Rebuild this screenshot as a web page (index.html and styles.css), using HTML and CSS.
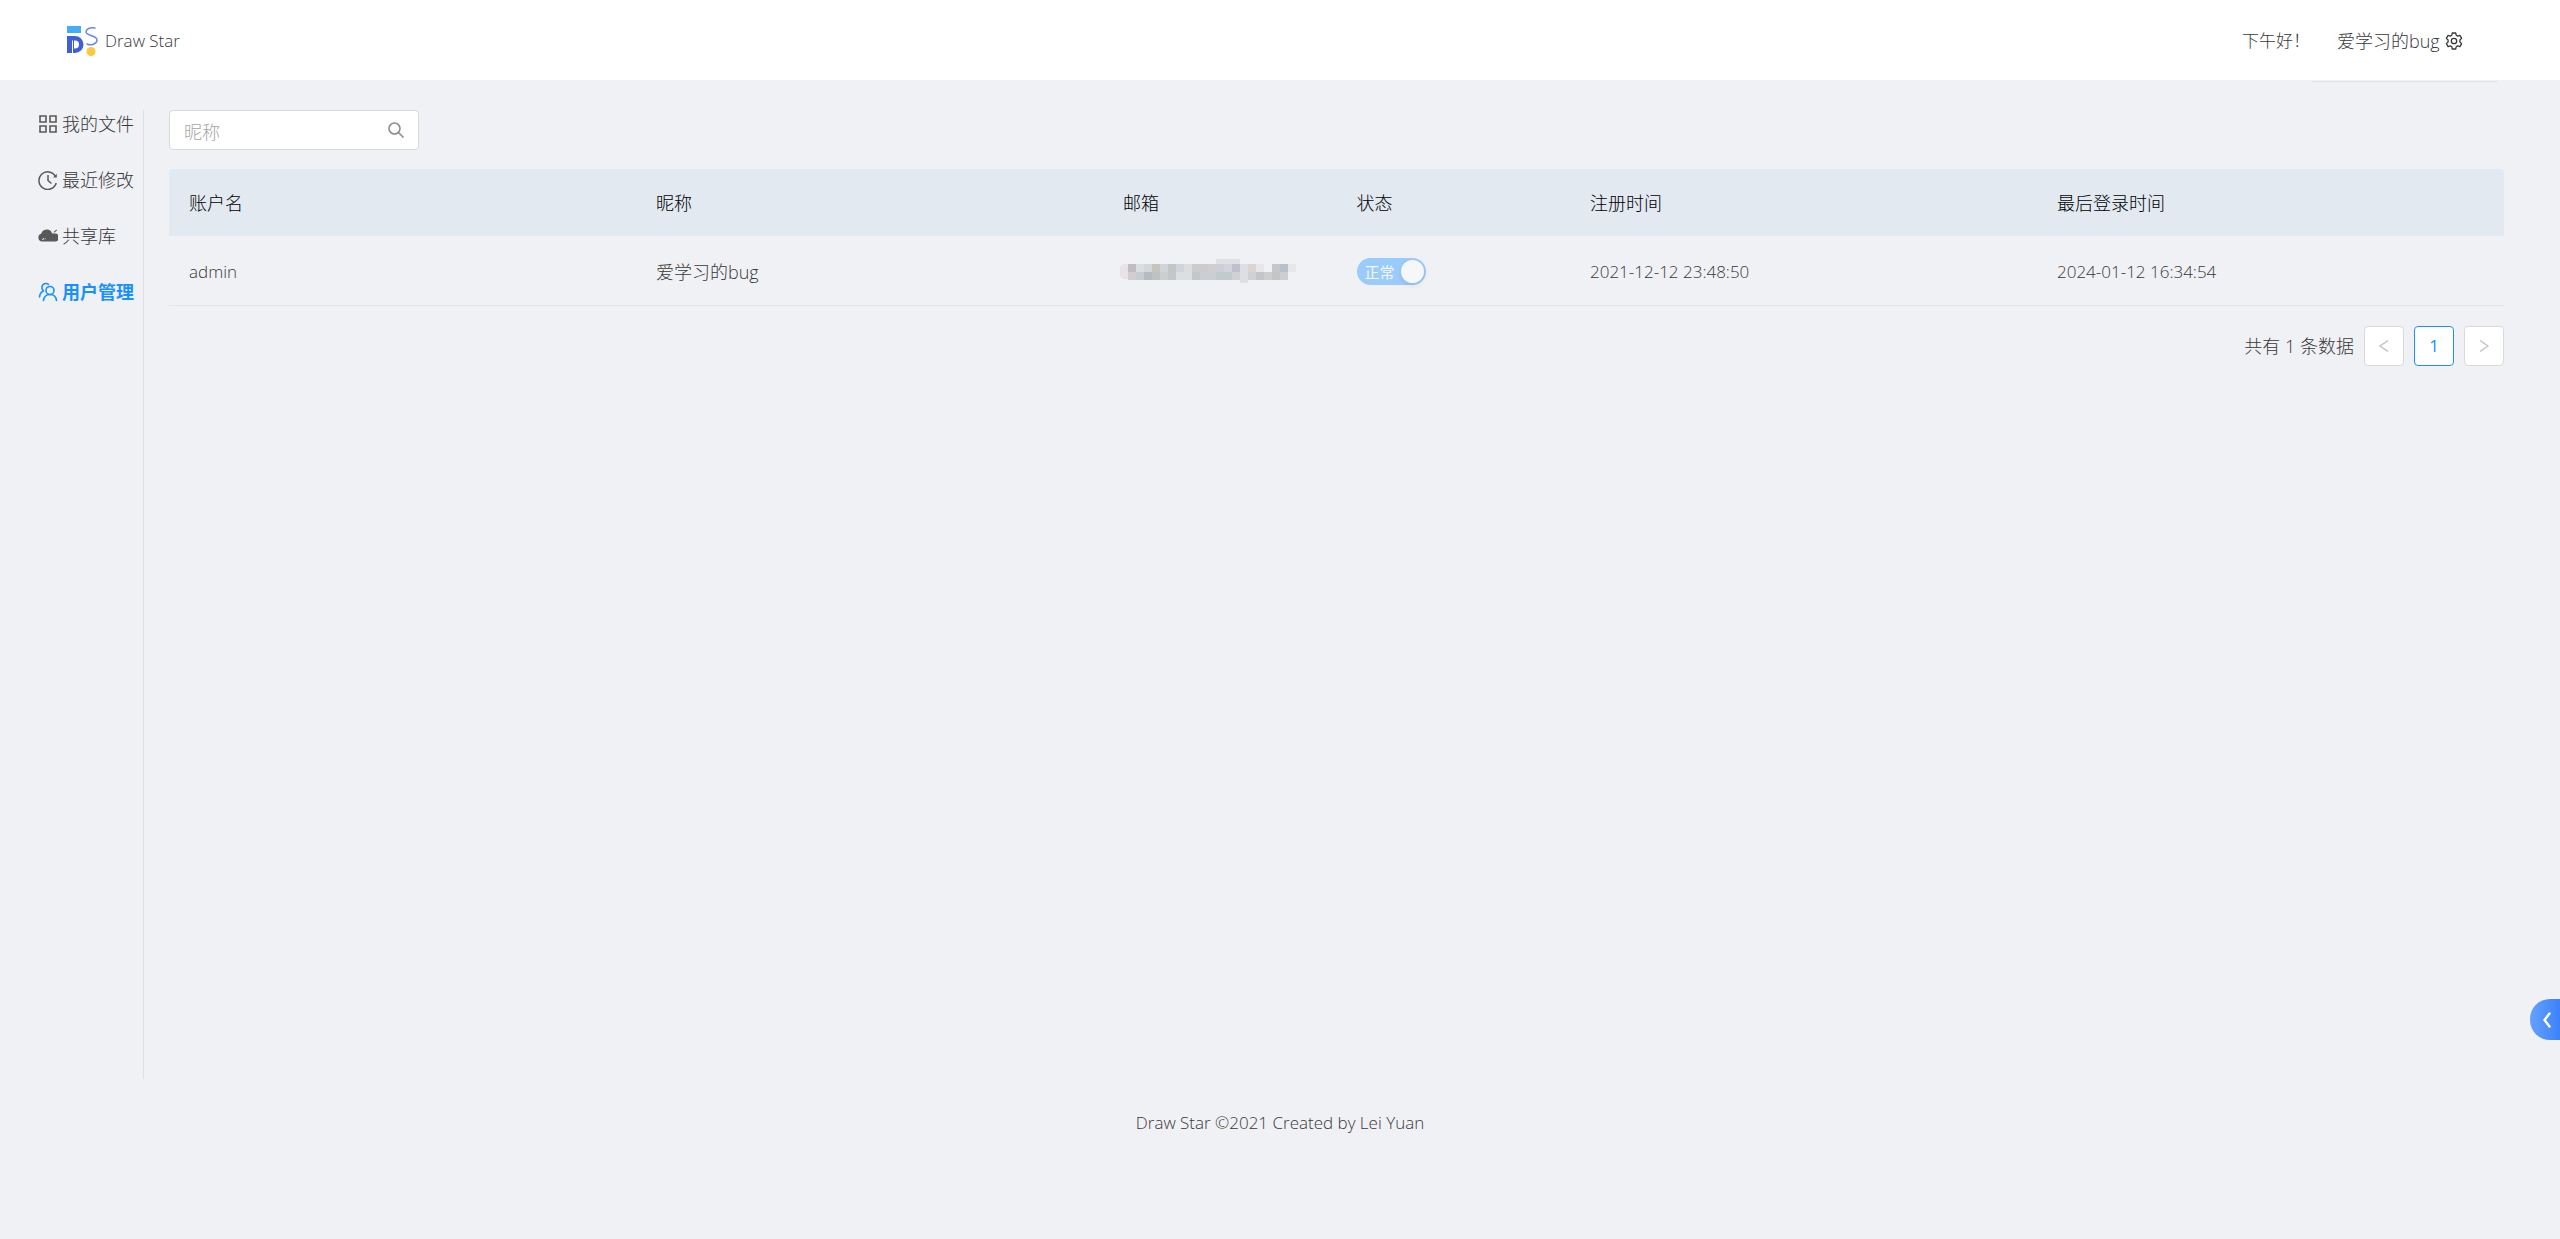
FILE: index.html
```html
<!DOCTYPE html>
<html lang="zh-CN">
<head>
<meta charset="utf-8">
<meta name="viewport" content="width=device-width, initial-scale=1">
<title>Draw Star</title>
<link rel="stylesheet" href="styles.css">
</head>
<body>
<header class="header">
  <a class="brand" href="#">
    <svg class="brand-logo" viewBox="0 0 32 32" aria-hidden="true">
      <path fill="#42adfb" d="M1 1h14v7H1z"/>
      <path fill="#3f5fd2" fill-rule="evenodd" d="M1 11h8a8.500 8.500 0 0 1 0 17H1zM6 15.500V28h1v-12.500zM8 15.500v8h1a4 4 0 0 0 0-8z"/>
      <path fill="none" stroke="#6f86e6" stroke-width="1.500" stroke-linecap="round" d="M29 3c-5-1-9 1-9 4 0 4 11 3 11 8 0 4-6 6-10 4"/>
      <circle cx="25" cy="26.500" r="4.500" fill="#fdc93e"/>
    </svg>
    <span>Draw Star</span>
  </a>
  <div class="greeting">下午好！</div>
  <a class="account" href="#">
    <span>爱学习的bug</span>
    <svg class="icon" viewBox="0 0 18 18" aria-hidden="true"><g fill="none" stroke="currentColor" stroke-width="1.300" stroke-linejoin="round"><path d="M7.300 1h3.400l.5 2.200 1.500.9 2.200-.7 1.700 3-1.700 1.600v2l1.700 1.600-1.700 3-2.200-.7-1.500.9-.5 2.200H7.300l-.5-2.200-1.500-.9-2.200.7-1.700-3L3.100 10V8L1.400 6.400l1.700-3 2.200.7 1.500-.9z"/><circle cx="9" cy="9" r="2.700"/></g></svg>
  </a>
</header>

<div class="body">
  <nav class="sidebar">
    <a class="nav-item" href="#">
      <svg class="nav-icon" viewBox="0 0 20 20" aria-hidden="true"><path fill="none" stroke="currentColor" stroke-width="1.600" d="M2 2h6v6H2zM12 2h6v6h-6zM2 12h6v6H2zM12 12h6v6h-6z"/></svg>
      <span>我的文件</span>
    </a>
    <a class="nav-item" href="#">
      <svg class="nav-icon" viewBox="0 0 20 20" aria-hidden="true"><path fill="none" stroke="currentColor" stroke-width="1.500" d="M18.200 13a8.800 8.800 0 1 1-.8-6.700M10 5v5.500l3.400 3"/><path fill="currentColor" d="M18.800 3.800v3.700h-3.700z"/></svg>
      <span>最近修改</span>
    </a>
    <a class="nav-item" href="#">
      <svg class="nav-icon" viewBox="0 0 20 20" aria-hidden="true"><path fill="currentColor" d="M4 15.500a4 4 0 0 1-.8-7.800C4 4.800 6.500 3.500 9 3.500c2.500 0 4.500 1.500 5 3.700 1 .3 2 .3 3.200.3a4 4 0 0 1-.7 8zM15.500 6l3-2.500.6.700-2.800 2.600z"/><path fill="#f0f1f5" d="M4 13.500l1.500-1.500.8.800L5 14zM7 12l.8.800-1 1z"/></svg>
      <span>共享库</span>
    </a>
    <a class="nav-item nav-item-active" href="#" aria-current="page">
      <svg class="nav-icon" viewBox="0 0 20 20" aria-hidden="true"><g fill="none" stroke="currentColor" stroke-width="1.600" stroke-linecap="round"><circle cx="12" cy="8.500" r="4"/><path d="M5.500 18.500c.5-4 3-6 6.500-6s6 2 6.500 6M5.500 8.800a3.800 3.800 0 1 1 5-6.500M1.500 15c.2-3 1.500-5 4-6"/></g></svg>
      <span>用户管理</span>
    </a>
  </nav>

  <main class="content">
    <form class="search">
      <input class="search-input" type="text" placeholder="昵称" aria-label="昵称">
      <button class="search-button" type="button" aria-label="搜索">
        <svg class="icon" viewBox="0 0 18 18" aria-hidden="true"><g fill="none" stroke="currentColor" stroke-width="1.600"><circle cx="7.500" cy="7.500" r="5.500"/><path d="M11.500 11.500l5 5"/></g></svg>
      </button>
    </form>

    <table class="users">
      <colgroup><col class="wide"><col class="wide"><col class="narrow"><col class="narrow"><col class="wide"><col class="wide"></colgroup>
      <thead>
        <tr><th>账户名</th><th>昵称</th><th>邮箱</th><th>状态</th><th>注册时间</th><th>最后登录时间</th></tr>
      </thead>
      <tbody>
        <tr>
          <td>admin</td>
          <td class="name-cell">爱学习的bug</td>
          <td class="mail-cell"><svg class="mail-mask" viewBox="0 0 176 24" shape-rendering="crispEdges" aria-hidden="true">
            <path fill="#e8e3e4" d="M2 5h6v15H2zM0 7h2v11H0z"/><path fill="#c1bcc2" d="M8 5h8v8H8z"/><path fill="#dbdedd" d="M16 5h8v8h-8z"/><path fill="#d2d8da" d="M24 5h8v8h-8z"/><path fill="#c6c5bd" d="M32 5h8v8h-8z"/><path fill="#d0d4db" d="M40 5h8v8h-8zM56 5h8v8h-8z"/><path fill="#c4c5c6" d="M48 5h8v8h-8z"/><path fill="#dcdddf" d="M64 5h8v8h-8z"/><path fill="#cccccd" d="M72 5h16v8H72z"/><path fill="#d2cdd1" d="M88 5h8v8h-8z"/><path fill="#dfe0e5" d="M96 0h24v5H96z"/><path fill="#cdced6" d="M96 5h8v8h-8z"/><path fill="#d1d3df" d="M104 5h8v8h-8z"/><path fill="#bfc0cb" d="M112 5h8v8h-8z"/><path fill="#dedfe2" d="M120 5h8v19h-8z"/><path fill="#ddd2d4" d="M128 5h8v8h-8z"/><path fill="#e5e7eb" d="M136 5h8v8h-8zM168 5h8v8h-8z"/><path fill="#c8c7c7" d="M152 5h8v8h-8z"/><path fill="#b9c0c8" d="M160 5h8v8h-8z"/>
            <path fill="#d3cdcd" d="M8 13h8v8H8z"/><path fill="#c6ccd3" d="M16 13h8v8h-8z"/><path fill="#b6bbc0" d="M24 13h8v8h-8z"/><path fill="#bcc3c2" d="M32 13h8v8h-8z"/><path fill="#cdcfcf" d="M40 13h8v8h-8z"/><path fill="#c4c7ca" d="M48 13h8v8h-8zM72 13h8v8h-8z"/><path fill="#dcdfe1" d="M56 13h16v8H56z"/><path fill="#cbced2" d="M80 13h16v8H80z"/><path fill="#c1cacc" d="M96 13h16v8H96z"/><path fill="#cfd1d5" d="M112 13h8v8h-8zM128 13h8v8h-8z"/><path fill="#c4c5c6" d="M136 13h8v8h-8zM152 13h8v8h-8z"/><path fill="#cecece" d="M144 13h8v8h-8zM160 13h8v8h-8z"/>
          </svg></td>
          <td><label class="switch"><input class="switch-input" type="checkbox" role="switch" checked disabled><span class="switch-text">正常</span><span class="switch-knob"></span></label></td>
          <td>2021-12-12 23:48:50</td>
          <td>2024-01-12 16:34:54</td>
        </tr>
      </tbody>
    </table>

    <div class="pagination">
      <span class="pagination-total">共有 1 条数据</span>
      <button class="page-button" type="button" disabled aria-label="上一页"><svg class="page-arrow" viewBox="0 0 14 14" aria-hidden="true"><path fill="none" stroke="currentColor" stroke-width="1.300" d="M11 1.500L3 7l8 5.500"/></svg></button>
      <button class="page-button page-button-current" type="button" aria-current="page">1</button>
      <button class="page-button" type="button" disabled aria-label="下一页"><svg class="page-arrow" viewBox="0 0 14 14" aria-hidden="true"><path fill="none" stroke="currentColor" stroke-width="1.300" d="M3 1.500L11 7l-8 5.500"/></svg></button>
    </div>
  </main>
</div>

<footer class="footer">Draw Star ©2021 Created by Lei Yuan</footer>

<button class="drawer-toggle" type="button" aria-label="展开"><svg class="drawer-arrow" viewBox="0 0 10 16" aria-hidden="true"><path fill="none" stroke="currentColor" stroke-width="2.400" stroke-linecap="round" d="M7.500 1.500L2.500 8l5 6.500"/></svg></button>
</body>
</html>
```
FILE: styles.css
```css
* {
  box-sizing: border-box;
}

body {
  margin: 0;
  min-height: 100vh;
  background: #f0f1f5;
  color: #383838;
  font-family: "Open Sans", "Noto Sans CJK SC", sans-serif;
  font-size: 17px;
  font-weight: 300;
  line-height: 28px;
}

a {
  color: inherit;
  text-decoration: none;
}

button,
input {
  font: inherit;
}

.icon {
  width: 18px;
  height: 18px;
}

/* Header */
.header {
  display: flex;
  align-items: center;
  height: 80px;
  padding: 2px 62px 0;
  background: #fff;
}

.brand {
  display: flex;
  align-items: center;
  gap: 7px;
  margin-right: auto;
  padding-left: 4px;
}

.brand-logo {
  width: 32px;
  height: 32px;
}

.greeting {
  width: 70px;
  white-space: nowrap;
}

.account {
  display: flex;
  align-items: center;
  gap: 5px;
  width: 186px;
  height: 82px;
  padding-left: 25px;
  border-bottom: 1px solid #e4e4e6;
  font-size: 18px;
  white-space: nowrap;
}

/* Layout */
.body {
  display: flex;
  gap: 25px;
  min-height: calc(100vh - 240px);
  padding: 30px 56px 0 38px;
}

.sidebar {
  flex: none;
  width: 106px;
  border-right: 1px solid #e0e0e3;
}

.nav-item {
  display: flex;
  align-items: center;
  gap: 4px;
  height: 28px;
  margin-bottom: 28px;
  font-size: 18px;
  white-space: nowrap;
}

.nav-icon {
  flex: none;
  width: 20px;
  height: 20px;
  color: #595959;
}

.nav-item-active,
.nav-item-active .nav-icon {
  color: #1890ff;
  font-weight: 700;
}

.content {
  flex: 1;
  min-width: 0;
}

/* Search */
.search {
  display: flex;
  width: 250px;
  height: 40px;
  margin-bottom: 19px;
  border: 1px solid #d9d9d9;
  border-radius: 4px;
  background: #fff;
}

.search-input {
  flex: 1;
  min-width: 0;
  padding: 4px 14px 0;
  border: 0;
  background: none;
  color: #383838;
  font-size: 18px;
  outline: 0;
}

.search-input::placeholder {
  color: #a6a6a6;
}

.search-button {
  display: flex;
  align-items: center;
  padding: 0 13px;
  border: 0;
  background: none;
  color: #8c8c8c;
}

/* Users table */
.users {
  width: 100%;
  border-spacing: 0;
  table-layout: fixed;
}

.wide {
  width: 20%;
}

.narrow {
  width: 10%;
}

.users th,
.users td {
  height: 67px;
  padding: 0 20px;
  text-align: left;
  white-space: nowrap;
}

.users th {
  background: #e2e9f1;
  color: #000;
  font-size: 18px;
  font-weight: 300;
}

.users th:first-child {
  border-top-left-radius: 4px;
}

.users th:last-child {
  border-top-right-radius: 4px;
}

.users td {
  height: 70px;
  padding-top: 2px;
  border-bottom: 1px solid #e6e6ea;
}

.users .name-cell {
  font-size: 18px;
}

.users .mail-cell {
  padding: 0 17px;
  overflow: visible;
}

.mail-mask {
  display: block;
  width: 176px;
  height: 24px;
}

.switch {
  display: flex;
  align-items: center;
  justify-content: space-between;
  width: 69px;
  height: 27px;
  padding: 0 2px 0 8px;
  border-radius: 14px;
  background: #9bcbfb;
  color: #f5f7fa;
}

.switch-input {
  position: absolute;
  opacity: 0;
}

.switch-text {
  font-size: 15px;
  font-weight: 400;
}

.switch-knob {
  width: 23px;
  height: 23px;
  border-radius: 50%;
  background: #f6f7f9;
  box-shadow: 0 2px 5px rgba(0, 35, 11, 0.1);
}

/* Pagination */
.pagination {
  display: flex;
  align-items: center;
  justify-content: flex-end;
  gap: 10px;
  margin-top: 20px;
}

.pagination-total {
  font-size: 18px;
}

.page-button {
  display: flex;
  align-items: center;
  justify-content: center;
  width: 40px;
  height: 40px;
  padding: 0;
  border: 1px solid #d9d9d9;
  border-radius: 4px;
  background: #fff;
  color: #bfbfbf;
}

.page-button-current {
  border-color: #1890ff;
  color: #1890ff;
  font-weight: 400;
}

.page-arrow {
  width: 14px;
  height: 14px;
}

/* Footer */
.footer {
  padding: 30px 60px;
  text-align: center;
}

/* Drawer handle pinned to the window edge */
.drawer-toggle {
  position: fixed;
  right: 0;
  bottom: 199px;
  display: flex;
  align-items: center;
  justify-content: flex-end;
  width: 30px;
  height: 41px;
  padding: 0 8px 0 0;
  border: 0;
  border-radius: 20px 0 0 20px;
  background: linear-gradient(90deg, #66a1fb, #3c82fb);
  color: #fff;
}

.drawer-arrow {
  width: 10px;
  height: 16px;
}
```
